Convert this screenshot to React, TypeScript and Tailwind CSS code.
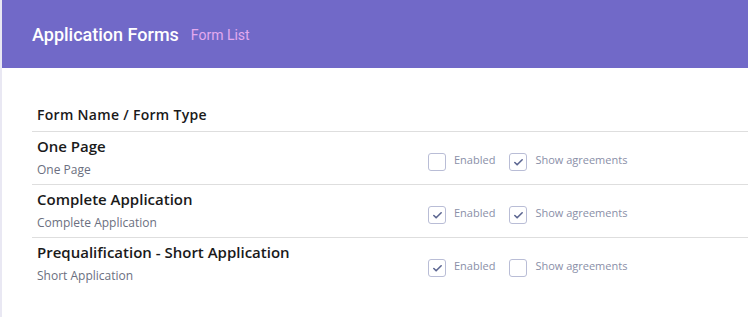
import { Check } from "lucide-react";

interface FormRow {
  name: string;
  type: string;
  enabled: boolean;
  agreements: boolean;
}

const rows: FormRow[] = [
  { name: "One Page", type: "One Page", enabled: false, agreements: true },
  {
    name: "Complete Application",
    type: "Complete Application",
    enabled: true,
    agreements: true,
  },
  {
    name: "Prequalification - Short Application",
    type: "Short Application",
    enabled: true,
    agreements: false,
  },
];

const CheckBox = ({ checked, label }: { checked: boolean; label: string }) => (
  <label className="flex items-start gap-[8px]">
    <span className="flex h-[18px] w-[18px] items-center justify-center rounded-[3px] border border-[#b9bdd6] bg-white">
      {checked && (
        <Check className="h-[11px] w-[11px] text-[#5c6691]" strokeWidth={3.5} />
      )}
    </span>
    <span className="text-[11px] leading-[14px] text-[#8a8fa8]">{label}</span>
  </label>
);

const App = () => {
  return (
    <div
      className="h-[317px] w-[748px] overflow-hidden border-l-2 border-[#e9e8f3] bg-white"
      style={{ fontFamily: "'Open Sans', sans-serif" }}
    >
      <div className="flex h-[68px] items-center gap-[12px] bg-[#7169c8] pl-[30px]">
        <span
          className="text-[18px] font-medium text-white"
          style={{ fontFamily: "Roboto, sans-serif" }}
        >
          Application Forms
        </span>
        <span
          className="pt-[2px] text-[14px] text-[#e4a9ef]"
          style={{ fontFamily: "Roboto, sans-serif" }}
        >
          Form List
        </span>
      </div>
      <div className="pl-[30px] pt-[36px]">
        <div className="border-b border-[#dedede] px-[5px] pb-[6px] text-[14px] font-semibold tracking-[0.3px] text-[#1a1a1a]">
          Form Name / Form Type
        </div>
        {rows.map((row) => (
          <div
            key={row.name}
            className="flex h-[53px] border-b border-[#dedede] px-[5px] last:border-b-0"
          >
            <div className="w-[391px] pt-[4px]">
              <div className="text-[15px] font-semibold leading-[20px] text-[#1a1a1a]">
                {row.name}
              </div>
              <div className="mt-[6px] text-[12px] leading-[16px] text-[#6b6f80]">
                {row.type}
              </div>
            </div>
            <div className="flex gap-[14px] pt-[21px]">
              <CheckBox checked={row.enabled} label="Enabled" />
              <CheckBox checked={row.agreements} label="Show agreements" />
            </div>
          </div>
        ))}
      </div>
    </div>
  );
};

export default App;
